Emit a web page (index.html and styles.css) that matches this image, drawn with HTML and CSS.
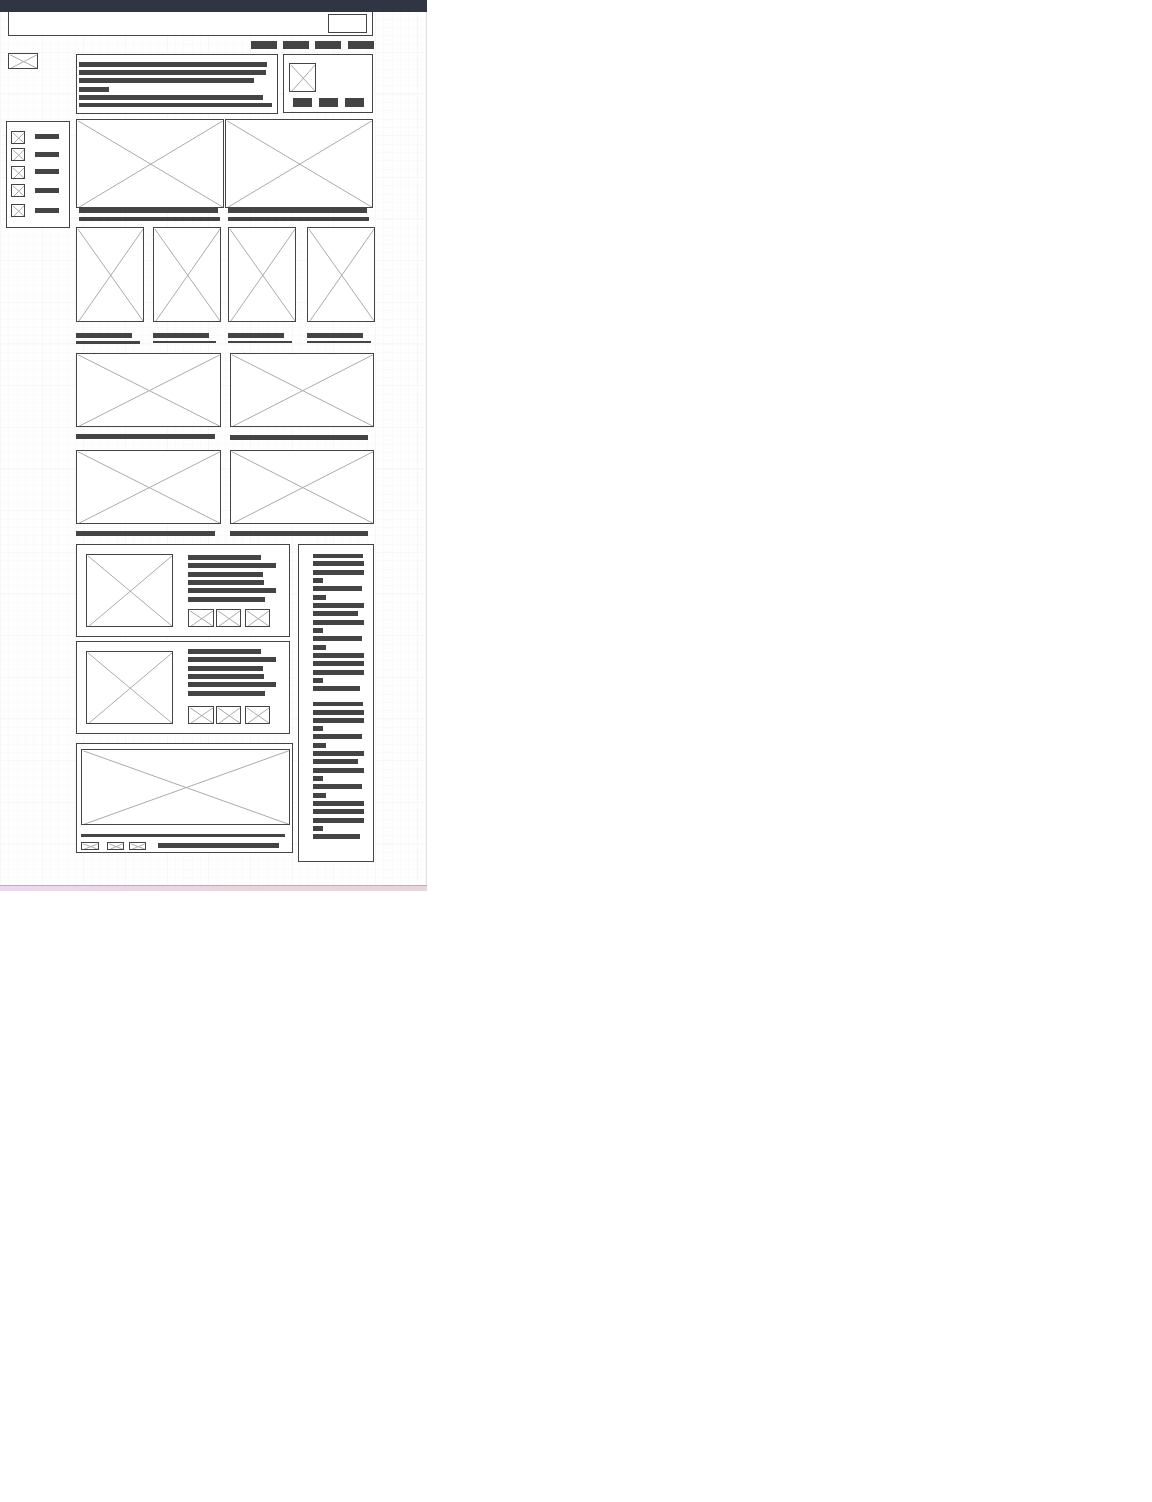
FILE: index.html
```html
<!DOCTYPE html>
<html lang="en">
<head>
<meta charset="utf-8">
<title>Wireframe</title>
<link rel="stylesheet" href="styles.css">
</head>
<body>
<svg class="defs" aria-hidden="true">
  <symbol id="cross" width="100%" height="100%">
    <line x1="0" y1="0" x2="100%" y2="100%"/>
    <line x1="1" y1="100%" x2="100%" y2="0"/>
  </symbol>
</svg>
<div class="page">
  <header class="topbar"></header>
  <div class="search"><div class="search-button"></div></div>
  <nav class="nav"><i></i><i></i><i></i><i></i></nav>
  <div class="layout">
    <aside class="left">
      <svg class="pic logo"><use href="#cross"/></svg>
      <ul class="box menu">
        <li><svg class="pic"><use href="#cross"/></svg><i></i></li>
        <li class="low"><svg class="pic"><use href="#cross"/></svg><i></i></li>
        <li><svg class="pic"><use href="#cross"/></svg><i></i></li>
        <li class="low"><svg class="pic"><use href="#cross"/></svg><i></i></li>
        <li class="low"><svg class="pic"><use href="#cross"/></svg><i></i></li>
      </ul>
    </aside>
    <main class="main">
      <section class="intro">
        <div class="box intro-text lines">
          <i style="width:188px"></i><i style="width:187px"></i><i style="width:175px"></i><i style="width:30px"></i><i style="width:184px"></i><i style="width:193px"></i>
        </div>
        <div class="box profile">
          <svg class="pic avatar"><use href="#cross"/></svg>
          <div class="profile-links"><i></i><i></i><i></i></div>
        </div>
      </section>
      <section class="heroes">
        <div class="hero"><svg class="pic"><use href="#cross"/></svg><i class="title"></i><i class="subtitle"></i></div>
        <div class="hero"><svg class="pic"><use href="#cross"/></svg><i class="title"></i><i class="subtitle"></i></div>
      </section>
      <section class="products">
        <div class="product first"><svg class="pic"><use href="#cross"/></svg><i class="title"></i><i class="subtitle"></i></div>
        <div class="product second"><svg class="pic"><use href="#cross"/></svg><i class="title"></i><i class="subtitle"></i></div>
        <div class="product"><svg class="pic"><use href="#cross"/></svg><i class="title"></i><i class="subtitle"></i></div>
        <div class="product"><svg class="pic"><use href="#cross"/></svg><i class="title"></i><i class="subtitle"></i></div>
      </section>
      <section class="pairs">
        <div class="tile"><svg class="pic"><use href="#cross"/></svg><i></i></div>
        <div class="tile lowered"><svg class="pic"><use href="#cross"/></svg><i></i></div>
        <div class="tile"><svg class="pic"><use href="#cross"/></svg><i></i></div>
        <div class="tile"><svg class="pic"><use href="#cross"/></svg><i></i></div>
      </section>
      <section class="bottom">
        <div class="cards">
          <article class="box card">
            <svg class="pic photo"><use href="#cross"/></svg>
            <div class="card-body">
              <div class="lines"><i style="width:73px"></i><i style="width:88px"></i><i style="width:75px"></i><i style="width:76px"></i><i style="width:88px"></i><i style="width:77px"></i></div>
              <div class="thumbs"><svg class="pic"><use href="#cross"/></svg><svg class="pic"><use href="#cross"/></svg><svg class="pic"><use href="#cross"/></svg></div>
            </div>
          </article>
          <article class="box card raised">
            <svg class="pic photo"><use href="#cross"/></svg>
            <div class="card-body">
              <div class="lines"><i style="width:73px"></i><i style="width:88px"></i><i style="width:75px"></i><i style="width:76px"></i><i style="width:88px"></i><i style="width:77px"></i></div>
              <div class="thumbs"><svg class="pic"><use href="#cross"/></svg><svg class="pic"><use href="#cross"/></svg><svg class="pic"><use href="#cross"/></svg></div>
            </div>
          </article>
          <article class="box banner">
            <svg class="pic wide"><use href="#cross"/></svg>
            <i class="rule"></i>
            <div class="banner-row"><svg class="pic"><use href="#cross"/></svg><svg class="pic"><use href="#cross"/></svg><svg class="pic"><use href="#cross"/></svg><i></i></div>
          </article>
        </div>
        <aside class="box sidebar">
          <div class="lines">
            <i style="width:50px"></i><i style="width:51px"></i><i style="width:51px"></i><i style="width:10px"></i><i style="width:49px"></i><i style="width:13px"></i><i style="width:51px"></i><i style="width:45px"></i><i style="width:51px"></i><i style="width:10px"></i><i style="width:49px"></i><i style="width:13px"></i><i style="width:51px"></i><i style="width:51px"></i><i style="width:51px"></i><i style="width:10px"></i><i style="width:47px"></i>
          </div>
          <div class="lines">
            <i style="width:50px"></i><i style="width:51px"></i><i style="width:51px"></i><i style="width:10px"></i><i style="width:49px"></i><i style="width:13px"></i><i style="width:51px"></i><i style="width:45px"></i><i style="width:51px"></i><i style="width:10px"></i><i style="width:49px"></i><i style="width:13px"></i><i style="width:51px"></i><i style="width:51px"></i><i style="width:51px"></i><i style="width:10px"></i><i style="width:47px"></i>
          </div>
        </aside>
      </section>
    </main>
  </div>
  <footer class="footer"></footer>
</div>
</body>
</html>
```
FILE: styles.css
```css
* { box-sizing: border-box; }
body { margin: 0; background: #fff; font-family: "Liberation Sans", sans-serif; }
.defs { display: block; width: 0; height: 0; }
i { display: block; flex: none; height: 5px; background: #444; }

.page {
  display: flex;
  flex-direction: column;
  width: 427px;
  height: 891px;
  background-color: #fefefe;
  background-image:
    linear-gradient(to left, #e2e2e2 1px, transparent 1px),
    repeating-linear-gradient(to right, #f7f7f7 0 1px, transparent 1px 41.667px),
    repeating-linear-gradient(to bottom, #f7f7f7 0 1px, transparent 1px 41.667px),
    repeating-linear-gradient(to right, #fafafa 0 1px, transparent 1px 8.3333px),
    repeating-linear-gradient(to bottom, #fafafa 0 1px, transparent 1px 8.3333px);
  background-position: 0 0, 0 0, 0 10px, 0 0, 0 2px;
}
.topbar { flex: none; height: 12px; background: #2f3542; }
.footer {
  flex: none;
  height: 6px;
  margin-top: auto;
  border-top: 1px solid #bfaab8;
  background: linear-gradient(to right, #eed8f1, #ead5dc 60%, #e9d6d8);
}

.box { border: 1px solid #444; background: #fff; }
.pic {
  display: block;
  flex: none;
  border: 1px solid #444;
  background: #fff;
  stroke: #aaa;
  stroke-width: 1px;
}
.pic use { transform: translate(0.5px, 0.5px); }

.search {
  display: flex;
  flex: none;
  justify-content: flex-end;
  width: 365px;
  height: 24px;
  margin-left: 8px;
  padding: 2px 5px 0 0;
  border: 1px solid #444;
  border-top: 0;
  background: #fff;
}
.search-button { width: 39px; height: 19px; border: 1px solid #444; }

.nav { display: flex; flex: none; gap: 6px; margin: 5px 0 0 251px; }
.nav i { width: 26px; height: 8px; }
.nav i:last-child { margin-left: 1px; }

.layout { display: grid; grid-template-columns: 76px 299px; }
.logo { width: 30px; height: 16px; margin: 4px 0 0 8px; }
.menu {
  display: flex;
  flex-direction: column;
  width: 64px;
  height: 107px;
  margin: 52px 0 0 6px;
  padding: 9px 0 0 4px;
  gap: 5px;
  list-style: none;
}
.menu li { display: flex; gap: 10px; height: 13px; }
.menu li:nth-child(2) { margin-top: -1px; }
.menu li:last-child { margin-top: 2px; }
.menu .pic { width: 14px; height: 13px; }
.menu i { width: 24px; margin-top: 3px; }
.menu .low i { margin-top: 4px; }

.main { padding-top: 5px; }
.lines { display: flex; flex-direction: column; gap: 3.33px; }

.intro { display: flex; gap: 5px; height: 60px; }
.intro-text { width: 202px; padding: 6.9px 0 0 2px; gap: 3.25px; }
.intro-text i:last-child { height: 4px; }
.profile { width: 90px; height: 59px; padding: 8px 0 0 5px; }
.avatar { width: 27px; height: 29px; }
.profile-links { display: flex; gap: 7px; margin: 6px 0 0 4px; }
.profile-links i { width: 19px; height: 9px; }

.heroes { display: flex; gap: 1px; margin-top: 5px; }
.hero .pic { width: 148px; height: 89px; }
.hero i { margin-left: 3px; }
.hero .title { width: 139px; height: 6px; margin-top: -1px; }
.hero .subtitle { width: 141px; height: 4px; margin-top: 4px; }

.products {
  display: grid;
  grid-template-columns: 77px 75px 79px 68px;
  height: 117px;
  margin-top: 6px;
}
.product .pic { width: 68px; height: 95px; }
.product .title { width: 56px; margin-top: 11px; }
.product .subtitle { width: 64px; height: 2px; margin-top: 3px; }
.product.first .subtitle { height: 3px; }
.product.second .subtitle { width: 63px; }

.pairs {
  display: grid;
  grid-template-columns: 145px 144px;
  grid-template-rows: 87px 86px;
  gap: 10px 9px;
  margin-top: 9px;
}
.tile .pic { width: 100%; height: 74px; }
.tile i { width: 139px; margin-top: 7px; }
.tile:nth-child(even) i { width: 138px; }
.tile.lowered i { margin-top: 8px; }

.bottom { display: flex; justify-content: space-between; width: 298px; margin-top: 8px; }
.card { display: flex; gap: 15px; width: 214px; height: 93px; padding: 9px; }
.card.raised { margin-top: 4px; }
.photo { width: 87px; height: 73px; }
.card-body {
  display: flex;
  flex-direction: column;
  justify-content: space-between;
  width: 88px;
  height: 73px;
  padding-top: 1.1px;
}
.raised .card-body { height: 75px; margin-top: -2px; padding-top: 0.1px; }
.thumbs { display: flex; gap: 2px; }
.thumbs .pic { width: 25px; height: 18px; }
.thumbs .pic:first-child { width: 26px; }
.thumbs .pic:last-child { margin-left: 2px; }

.banner { width: 217px; height: 110px; margin-top: 9px; padding: 5px 0 0 4px; }
.wide { width: 209px; height: 76px; }
.rule { width: 204px; height: 3px; margin-top: 9px; }
.banner-row { display: flex; margin-top: 5px; }
.banner-row .pic { width: 17px; height: 8px; margin-right: 5px; }
.banner-row .pic:first-child { width: 18px; margin-right: 8px; }
.banner-row i { width: 121px; margin: 1px 0 0 7px; }

.sidebar { width: 76px; height: 318px; padding: 9px 0 0 14px; }
.sidebar .lines i:first-child { height: 4px; }
.sidebar .lines + .lines { margin-top: 10.75px; }
.sidebar .lines + .lines i:first-child { margin-bottom: 0.172px; }
```
